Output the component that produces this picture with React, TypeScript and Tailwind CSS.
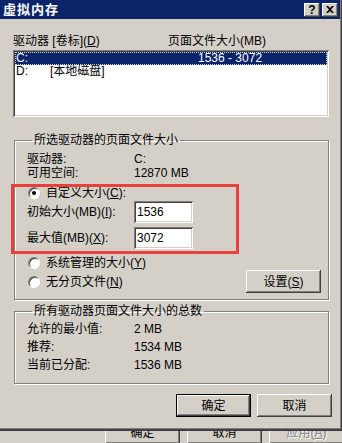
import React from 'react';

const FONT = { fontFamily: '"Liberation Sans", "Noto Sans CJK SC", sans-serif' };

const raised =
  'bg-[#d4d0c8] shadow-[inset_-1px_-1px_0_#404040,inset_1px_1px_0_#ffffff,inset_-2px_-2px_0_#808080,inset_2px_2px_0_#d4d0c8]';
const sunken =
  'bg-white shadow-[inset_1px_1px_0_#808080,inset_-1px_-1px_0_#ffffff,inset_2px_2px_0_#404040,inset_-2px_-2px_0_#d4d0c8]';

const Key: React.FC<{ k: string }> = ({ k }) => (
  <span>
    (<span className="underline">{k}</span>)
  </span>
);

const Radio: React.FC<{ checked?: boolean; children: React.ReactNode }> = ({ checked, children }) => (
  <div className="flex items-center h-[14px]">
    <span className="relative w-[12px] h-[12px] rounded-full bg-white border border-t-[#808080] border-l-[#808080] border-r-white border-b-white shadow-[inset_1px_1px_0_#404040] ml-[1px] flex items-center justify-center">
      {checked && <span className="w-[4px] h-[4px] rounded-full bg-black" />}
    </span>
    <span className="ml-[6px] leading-[14px]">{children}</span>
  </div>
);

const Group: React.FC<{ title: string; className?: string; children: React.ReactNode }> = ({ title, className, children }) => (
  <fieldset
    className={`border border-[#808080] shadow-[inset_1px_1px_0_#ffffff,1px_1px_0_#ffffff] pl-[12px] pr-[6px] ${className ?? ''}`}
  >
    <legend className="ml-[5px] px-[2px] leading-[14px] h-[14px]">{title}</legend>
    {children}
  </fieldset>
);

const Btn: React.FC<{ children: React.ReactNode; def?: boolean; className?: string }> = ({ children, def, className }) => (
  <div
    className={`w-[75px] h-[23px] flex items-center justify-center ${
      def
        ? 'bg-[#d4d0c8] shadow-[inset_0_0_0_1px_#000000,inset_-2px_-2px_0_#404040,inset_2px_2px_0_#ffffff,inset_-3px_-3px_0_#808080]'
        : raised
    } ${className ?? ''}`}
  >
    {children}
  </div>
);

export default function App() {
  return (
    <div
      className="relative w-[342px] h-[443px] overflow-hidden bg-[#d4d0c8] text-[12px] text-black flex flex-col"
      style={FONT}
    >
      {/* dialog window */}
      <div className="h-[430px] shrink-0 flex flex-col shadow-[inset_-1px_-1px_0_#404040,inset_-2px_-2px_0_#808080]">
        <div className="h-[19px] mr-[2px] bg-[#0a246a] flex items-center justify-between pl-[3px] pr-[2px]">
          <span className="text-white font-bold text-[13px] leading-[19px] tracking-[1px]">虚拟内存</span>
          <div className="flex gap-[2px]">
            <div className={`w-[16px] h-[14px] ${raised} flex items-center justify-center font-bold text-[12px] leading-none`}>?</div>
            <div className={`w-[16px] h-[14px] ${raised} flex items-center justify-center`}>
              <svg width="8" height="7" viewBox="0 0 8 7">
                <path d="M0 0h2l2 2 2-2h2L5 3.5 8 7H6L4 5 2 7H0l3-3.5z" fill="#000" />
              </svg>
            </div>
          </div>
        </div>

        <div className="pl-[13px] pr-[10px] flex flex-col">
          <div className="mt-[16px] h-[12px] leading-[12px] flex">
            <span className="w-[155px]">
              驱动器 [卷标]<Key k="D" />
            </span>
            <span>页面文件大小(MB)</span>
          </div>

          <div className={`mt-[3px] h-[67px] w-[316px] ${sunken} p-[2px]`}>
            <div className="h-[13px] bg-[#0a246a] text-white flex leading-[13px] outline-1 outline-dotted outline-offset-[-1px] outline-[#d4d0c8]">
              <span className="pl-[1px] w-[183px]">C:</span>
              <span>1536 - 3072</span>
            </div>
            <div className="h-[13px] flex leading-[13px]">
              <span className="pl-[1px] w-[35px]">D:</span>
              <span>[本地磁盘]</span>
            </div>
          </div>

          <Group title="所选驱动器的页面文件大小" className="mt-[16px] ml-[1px] w-[315px] pb-[6px]">
            <div className="mt-[5px] flex h-[14px] leading-[14px]">
              <span className="w-[107px]">驱动器:</span>
              <span>C:</span>
            </div>
            <div className="flex h-[14px] leading-[14px]">
              <span className="w-[107px]">可用空间:</span>
              <span>12870 MB</span>
            </div>
            <div className="mt-[6px]">
              <Radio checked>
                自定义大小<Key k="C" />:
              </Radio>
            </div>
            <div className="mt-[1px] flex items-center h-[22px]">
              <span className="w-[107px]">
                初始大小(MB)<Key k="I" />:
              </span>
              <div className={`w-[59px] h-[22px] ${sunken} pl-[3px] leading-[22px]`}>1536</div>
            </div>
            <div className="mt-[4px] flex items-center h-[22px]">
              <span className="w-[107px]">
                最大值(MB)<Key k="X" />:
              </span>
              <div className={`w-[59px] h-[22px] ${sunken} pl-[3px] leading-[22px]`}>3072</div>
            </div>
            <div className="mt-[7px]">
              <Radio>
                系统管理的大小<Key k="Y" />
              </Radio>
            </div>
            <div className="flex items-center justify-between h-[23px] pr-[1px]">
              <Radio>
                无分页文件<Key k="N" />
              </Radio>
              <Btn>
                设置<Key k="S" />
              </Btn>
            </div>
          </Group>

          <Group title="所有驱动器页面文件大小的总数" className="mt-[4px] ml-[1px] w-[315px] pb-[11px]">
            <div className="mt-[4px] flex flex-col gap-[4px]">
              {[
                ['允许的最小值:', '2 MB'],
                ['推荐:', '1534 MB'],
                ['当前已分配:', '1536 MB'],
              ].map(([a, b]) => (
                <div key={a} className="flex h-[14px] leading-[14px]">
                  <span className="w-[107px]">{a}</span>
                  <span>{b}</span>
                </div>
              ))}
            </div>
          </Group>

          <div className="mt-[10px] flex justify-end gap-[6px]">
            <Btn def>确定</Btn>
            <Btn>取消</Btn>
          </div>
        </div>
      </div>

      {/* parent dialog, partly hidden behind the window */}
      <div className="h-[13px] overflow-hidden flex gap-[7px] pl-[105px] border-t border-[#404040]">
        <Btn className="-mt-[10px] shrink-0">确定</Btn>
        <Btn className="-mt-[10px] shrink-0">取消</Btn>
        <Btn className="-mt-[10px] shrink-0 text-[#808080] [text-shadow:1px_1px_0_#ffffff]">
          应用<Key k="A" />
        </Btn>
      </div>

      {/* red highlight annotation */}
      <div className="absolute left-[11px] top-[184px] w-[228px] h-[70px] border-[3px] border-[#e8413c] pointer-events-none" />
    </div>
  );
}
